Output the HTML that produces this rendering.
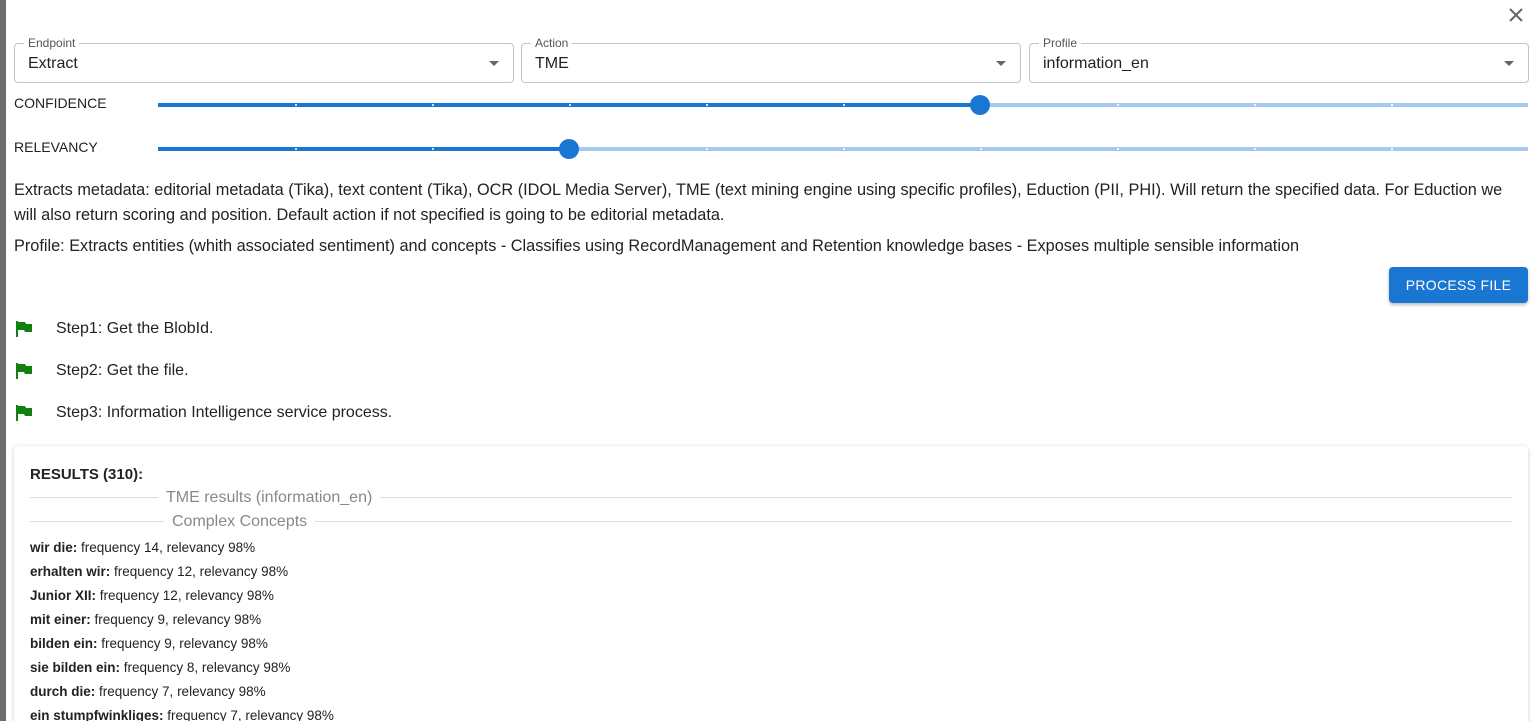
<!DOCTYPE html>
<html style="height:721px;overflow:hidden"><head><style>
body{margin:0;width:1536px;height:721px;overflow:hidden;background:#fff;font-family:"Liberation Sans",sans-serif;color:#222;position:relative}
.strip{position:absolute;left:0;top:0;width:6px;height:721px;background:#6b6b6b}
.field{position:absolute;top:43px;height:38px;border:1px solid #c4c4c4;border-radius:4px}
.field .lab{position:absolute;top:-8px;left:9px;background:#fff;padding:0 4px;font-size:12px;color:#555}
.field .val{position:absolute;left:13px;top:11px;font-size:16px;color:#222}
.field .arr{position:absolute;right:14px;top:17px;width:0;height:0;border-left:5px solid transparent;border-right:5px solid transparent;border-top:5px solid #666}
.slabel{position:absolute;left:14px;font-size:14px;color:#222}
.track{position:absolute;left:158px;width:1370px;height:4px;background:#a6c9ee}
.fill{position:absolute;left:0;top:0;height:4px;background:#1976d2}
.tick{position:absolute;top:1px;width:2px;height:2px;background:#fff;opacity:.8}
.thumb{position:absolute;top:-8px;width:20px;height:20px;border-radius:50%;background:#1976d2;margin-left:-10px}
p{position:absolute;left:14px;margin:0;font-size:16.3px;line-height:25px;width:1500px}
.btn{position:absolute;left:1389px;top:267px;width:139px;height:36px;background:#1976d2;color:#fff;border-radius:4px;font-size:14px;text-align:center;line-height:36px;letter-spacing:.3px;box-shadow:0 2px 3px rgba(0,0,0,.25)}
.step{position:absolute;left:56px;font-size:16px;color:#222}
.flag{position:absolute;left:16px}
.card{position:absolute;left:14px;top:446px;width:1514px;height:290px;box-shadow:0 1px 4px rgba(0,0,0,.2);border-radius:4px;background:#fff}
.div{position:absolute;left:16px;width:1482px;height:1px;background:#ddd}
.dtext{position:absolute;background:#fff;padding:0 8px;font-size:16px;color:#888}
.row{position:absolute;left:16px;font-size:13.5px;color:#222}
</style></head><body>
<div class="strip"></div>
<svg style="position:absolute;left:1508px;top:7px" width="16" height="16"><path d="M2 2L14 14M14 2L2 14" stroke="#666" stroke-width="2"/></svg>
<div class="field" style="left:14px;width:498px"><span class="lab">Endpoint</span><span class="val">Extract</span><span class="arr"></span></div>
<div class="field" style="left:521px;width:498px"><span class="lab">Action</span><span class="val">TME</span><span class="arr"></span></div>
<div class="field" style="left:1029px;width:498px"><span class="lab">Profile</span><span class="val">information_en</span><span class="arr"></span></div>
<div class="slabel" style="top:95px">CONFIDENCE</div>
<div class="track" style="top:103px"><div class="fill" style="width:822px"></div>
<div class="tick" style="left:137px"></div><div class="tick" style="left:274px"></div><div class="tick" style="left:411px"></div><div class="tick" style="left:548px"></div><div class="tick" style="left:685px"></div><div class="tick" style="left:959px"></div><div class="tick" style="left:1096px"></div><div class="tick" style="left:1233px"></div>
<div class="thumb" style="left:822px"></div></div>
<div class="slabel" style="top:139px">RELEVANCY</div>
<div class="track" style="top:147px"><div class="fill" style="width:411px"></div>
<div class="tick" style="left:137px"></div><div class="tick" style="left:274px"></div><div class="tick" style="left:548px"></div><div class="tick" style="left:685px"></div><div class="tick" style="left:822px"></div><div class="tick" style="left:959px"></div><div class="tick" style="left:1096px"></div><div class="tick" style="left:1233px"></div>
<div class="thumb" style="left:411px"></div></div>
<p style="top:178px">Extracts metadata: editorial metadata (Tika), text content (Tika), OCR (IDOL Media Server), TME (text mining engine using specific profiles), Eduction (PII, PHI). Will return the specified data. For Eduction we will also return scoring and position. Default action if not specified is going to be editorial metadata.</p>
<p style="top:234px">Profile: Extracts entities (whith associated sentiment) and concepts - Classifies using RecordManagement and Retention knowledge bases - Exposes multiple sensible information</p>
<div class="btn">PROCESS FILE</div>
<svg class="flag" style="top:321px" width="16" height="16"><path d="M0 0H2V16H0ZM2 1H9L10 3H16V11H9L8 9H2Z" fill="#118011"/></svg>
<div class="step" style="top:320px">Step1: Get the BlobId.</div>
<svg class="flag" style="top:363px" width="16" height="16"><path d="M0 0H2V16H0ZM2 1H9L10 3H16V11H9L8 9H2Z" fill="#118011"/></svg>
<div class="step" style="top:362px">Step2: Get the file.</div>
<svg class="flag" style="top:405px" width="16" height="16"><path d="M0 0H2V16H0ZM2 1H9L10 3H16V11H9L8 9H2Z" fill="#118011"/></svg>
<div class="step" style="top:404px">Step3: Information Intelligence service process.</div>
<div class="card">
<div style="position:absolute;left:16px;top:20px;font-size:15px;font-weight:bold;color:#222">RESULTS (310):</div>
<div class="div" style="top:51px"></div><div class="dtext" style="left:144px;top:43px">TME results (information_en)</div>
<div class="div" style="top:75px"></div><div class="dtext" style="left:150px;top:67px">Complex Concepts</div>
<div class="row" style="top:94px"><b>wir die:</b> frequency 14, relevancy 98%</div>
<div class="row" style="top:118px"><b>erhalten wir:</b> frequency 12, relevancy 98%</div>
<div class="row" style="top:142px"><b>Junior XII:</b> frequency 12, relevancy 98%</div>
<div class="row" style="top:166px"><b>mit einer:</b> frequency 9, relevancy 98%</div>
<div class="row" style="top:190px"><b>bilden ein:</b> frequency 9, relevancy 98%</div>
<div class="row" style="top:214px"><b>sie bilden ein:</b> frequency 8, relevancy 98%</div>
<div class="row" style="top:238px"><b>durch die:</b> frequency 7, relevancy 98%</div>
<div class="row" style="top:262px"><b>ein stumpfwinkliges:</b> frequency 7, relevancy 98%</div>
</div>
</body></html>
